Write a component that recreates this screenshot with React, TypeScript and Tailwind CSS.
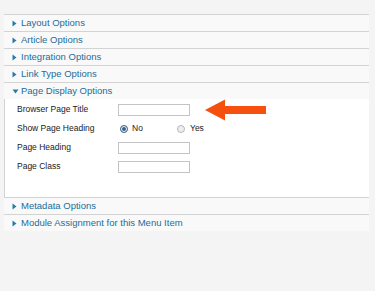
import React from "react";

const Tri = ({ down = false }: { down?: boolean }) =>
  down ? (
    <svg width="7" height="5" viewBox="0 0 7 5" className="shrink-0">
      <path d="M0.5 0.5 L6.5 0.5 L3.5 4.5 Z" fill="#2a7aa8" />
    </svg>
  ) : (
    <svg width="5" height="7" viewBox="0 0 5 7" className="shrink-0">
      <path d="M0.5 0.5 L4.5 3.5 L0.5 6.5 Z" fill="#2a7aa8" />
    </svg>
  );

const Header = ({ label, down = false }: { label: string; down?: boolean }) => (
  <div className="h-[17px] border-t border-[#d3d3d3] bg-[#f9f9f9] flex items-center pl-[8px]">
    <div className="w-[9px] flex justify-start">
      <Tri down={down} />
    </div>
    <span className="text-[9.5px] text-[#1b6d9a] leading-none">{label}</span>
  </div>
);

const Radio = ({ checked }: { checked: boolean }) => (
  <span
    className={
      "inline-block w-[8px] h-[8px] rounded-full border " +
      (checked ? "border-[#5a6f86] bg-[#2f5f93] ring-1 ring-inset ring-white" : "border-[#b8b8b8] bg-[#eeeeee]")
    }
  />
);

export default function App() {
  return (
    <div
      className="w-[375px] h-[291px] bg-[#f4f4f4] pt-[14px] pl-[4px] pr-[6px] relative"
      style={{ fontFamily: '"Liberation Sans", Arial, sans-serif' }}
    >
      <div className="flex flex-col">
        <Header label="Layout Options" />
        <Header label="Article Options" />
        <Header label="Integration Options" />
        <Header label="Link Type Options" />
        <Header label="Page Display Options" down />
        <div className="bg-white border-l border-[#d3d3d3] h-[98px] pt-[1px] pl-[12px] text-[8.5px] text-[#222]">
          <div className="h-[19px] flex items-center">
            <span className="w-[101px]">Browser Page Title</span>
            <span className="w-[72px] h-[12px] border border-[#c4c4c4] bg-white" />
          </div>
          <div className="h-[19px] flex items-center">
            <span className="w-[103px]">Show Page Heading</span>
            <span className="flex items-center gap-[4px] w-[57px]">
              <Radio checked />
              <span>No</span>
            </span>
            <span className="flex items-center gap-[5px]">
              <Radio checked={false} />
              <span>Yes</span>
            </span>
          </div>
          <div className="h-[19px] flex items-center">
            <span className="w-[101px]">Page Heading</span>
            <span className="w-[72px] h-[12px] border border-[#c4c4c4] bg-white" />
          </div>
          <div className="h-[19px] flex items-center">
            <span className="w-[101px]">Page Class</span>
            <span className="w-[72px] h-[12px] border border-[#c4c4c4] bg-white" />
          </div>
        </div>
        <Header label="Metadata Options" />
        <Header label="Module Assignment for this Menu Item" />
      </div>
      <svg
        width="62"
        height="22"
        viewBox="0 0 62 22"
        className="absolute left-[205px] top-[99px]"
      >
        <path d="M0 11 L20 0.5 L20 7 L61 7 L61 15 L20 15 L20 21.5 Z" fill="#f5500f" />
      </svg>
    </div>
  );
}
